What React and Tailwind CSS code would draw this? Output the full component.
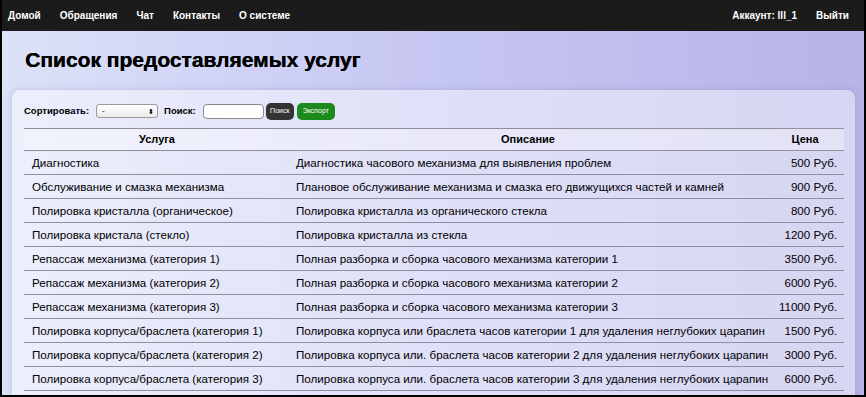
const navLinks = ['Домой', 'Обращения', 'Чат', 'Контакты', 'О системе'];

const services = [
  ['Диагностика', 'Диагностика часового механизма для выявления проблем', '500 Руб.'],
  ['Обслуживание и смазка механизма', 'Плановое обслуживание механизма и смазка его движущихся частей и камней', '900 Руб.'],
  ['Полировка кристалла (органическое)', 'Полировка кристалла из органического стекла', '800 Руб.'],
  ['Полировка кристала (стекло)', 'Полировка кристалла из стекла', '1200 Руб.'],
  ['Репассаж механизма (категория 1)', 'Полная разборка и сборка часового механизма категории 1', '3500 Руб.'],
  ['Репассаж механизма (категория 2)', 'Полная разборка и сборка часового механизма категории 2', '6000 Руб.'],
  ['Репассаж механизма (категория 3)', 'Полная разборка и сборка часового механизма категории 3', '11000 Руб.'],
  ['Полировка корпуса/браслета (категория 1)', 'Полировка корпуса или браслета часов категории 1 для удаления неглубоких царапин', '1500 Руб.'],
  ['Полировка корпуса/браслета (категория 2)', 'Полировка корпуса или. браслета часов категории 2 для удаления неглубоких царапин', '3000 Руб.'],
  ['Полировка корпуса/браслета (категория 3)', 'Полировка корпуса или. браслета часов категории 3 для удаления неглубоких царапин', '6000 Руб.'],
];

export default function App() {
  return (
    <div className="flex h-[397px] w-[866px] flex-col overflow-hidden border-x-2 border-b-2 border-black font-['Liberation_Sans',Arial,sans-serif] text-black">
      <nav className="flex h-[31px] shrink-0 items-center justify-between bg-[#1b1b1b] pl-[6px] pr-[15px] text-[10px] font-bold text-white">
        <div className="flex gap-[19px]">
          {navLinks.map((link) => (
            <span key={link}>{link}</span>
          ))}
        </div>
        <div className="flex gap-[19px]">
          <span>Аккаунт: lll_1</span>
          <span>Выйти</span>
        </div>
      </nav>

      <main className="flex-1 bg-gradient-to-r from-[#dce2f8] via-[#c6c6f2] to-[#b6b4e8] pt-[16px]">
        <h1 className="pl-[23px] text-[21px] font-bold leading-[25px] [text-shadow:0.4px_0_0_#000]">Список предоставляемых услуг</h1>

        <div className="ml-[10px] mr-[9px] mt-[18px] h-[400px] rounded-lg bg-white/45 px-[12px] pr-[11px] pt-[12px] shadow-[0_0_6px_rgba(90,90,150,0.25)]">
          <div className="flex h-[18px] items-center text-[9.5px] font-bold">
            <span>Сортировать:</span>
            <div className="ml-[7px] flex h-[14px] w-[62px] items-center justify-between rounded-[3px] border border-[#9a9a9a] bg-gradient-to-b from-white to-[#ececec] pl-[5px] pr-[3px] text-[8px] font-normal">
              <span>-</span>
              <span className="text-[7px] leading-none">⬍</span>
            </div>
            <span className="ml-[6px]">Поиск:</span>
            <div className="ml-[7px] h-[15px] w-[61px] rounded-[4px] border border-[#8a8a8a] bg-white" />
            <button className="ml-[2px] h-[17px] w-[28px] rounded-[5px] bg-[#333333] text-[7px] font-normal text-white">Поиск</button>
            <button className="ml-[3px] h-[17px] w-[38px] rounded-[5px] bg-[#1c8a1c] text-[7px] font-normal text-white">Экспорт</button>
          </div>

          <table className="mt-[8px] w-[820px] table-fixed border-t border-[#8f8f9c] text-[11.6px]">
            <colgroup>
              <col className="w-[266px]" />
              <col className="w-[476px]" />
              <col className="w-[78px]" />
            </colgroup>
            <thead>
              <tr className="h-[22px] border-b border-[#8f8f9e] bg-white/30">
                {['Услуга', 'Описание', 'Цена'].map((head) => (
                  <th key={head} className="text-center text-[11px] font-bold">{head}</th>
                ))}
              </tr>
            </thead>
            <tbody>
              {services.map((row) => (
                <tr key={row[0] + row[2]} className="h-[24px] border-b border-[#8f8f9e]">
                  <td className="whitespace-nowrap pl-[8px]">{row[0]}</td>
                  <td className="whitespace-nowrap pl-[6px]">{row[1]}</td>
                  <td className="whitespace-nowrap pr-[7px] text-right">{row[2]}</td>
                </tr>
              ))}
            </tbody>
          </table>
        </div>
      </main>
    </div>
  );
}
